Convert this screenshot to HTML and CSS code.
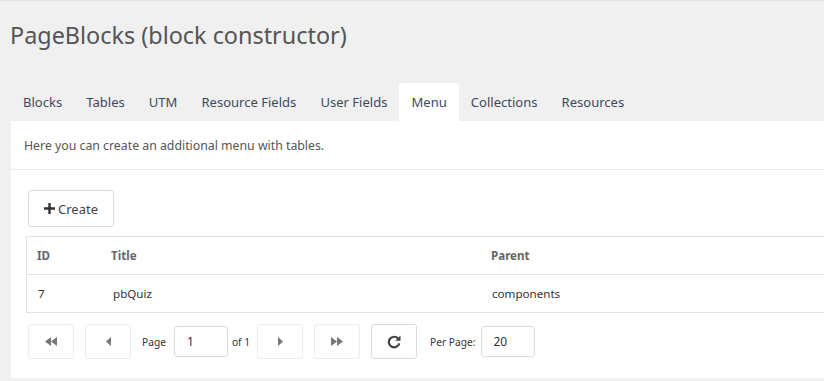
FILE: index.html
```html
<!DOCTYPE html>
<html>
<head>
<meta charset="utf-8">
<link rel="stylesheet" href="styles.css">
</head>
<body>
<div class="page">
  <h1 class="title">PageBlocks (block constructor)</h1>
  <div class="tabs">
    <div class="tab">Blocks</div>
    <div class="tab">Tables</div>
    <div class="tab">UTM</div>
    <div class="tab">Resource Fields</div>
    <div class="tab">User Fields</div>
    <div class="tab active">Menu</div>
    <div class="tab">Collections</div>
    <div class="tab">Resources</div>
  </div>
  <div class="panel">
    <div class="desc">Here you can create an additional menu with tables.</div>
    <div class="content">
      <div class="toolbar">
        <button class="btn create"><svg class="plus" width="11" height="11" viewBox="0 0 11 11"><path d="M4.3 0h2.4v4.3H11v2.4H6.7V11H4.3V6.7H0V4.3h4.3z" fill="#333"/></svg>Create</button>
      </div>
      <div class="grid">
        <div class="row head">
          <div class="c c-id">ID</div>
          <div class="c c-title">Title</div>
          <div class="c c-parent">Parent</div>
        </div>
        <div class="row">
          <div class="c c-id">7</div>
          <div class="c c-title">pbQuiz</div>
          <div class="c c-parent">components</div>
        </div>
      </div>
      <div class="pager">
        <button class="pbtn dis"><svg width="12" height="9" viewBox="0 0 12 9"><path d="M6 0v9L0 4.5zM12 0v9L6 4.5z" fill="#777"/></svg></button>
        <button class="pbtn dis"><svg width="5" height="9" viewBox="0 0 5 9"><path d="M5 0v9L0 4.5z" fill="#777"/></svg></button>
        <span class="lbl">Page</span>
        <input class="inp page-inp" value="1">
        <span class="lbl of">of 1</span>
        <button class="pbtn dis"><svg width="5" height="9" viewBox="0 0 5 9"><path d="M0 0v9l5-4.5z" fill="#777"/></svg></button>
        <button class="pbtn dis"><svg width="12" height="9" viewBox="0 0 12 9"><path d="M0 0v9l6-4.5zM6 0v9l6-4.5z" fill="#777"/></svg></button>
        <button class="pbtn refresh"><svg width="14" height="15" viewBox="0 0 14 15"><path d="M11.2 4.6A5.3 5.3 0 1 0 12.3 9.4" fill="none" stroke="#444" stroke-width="2.2"/><path d="M13.5 1.5v5.2H8.3z" fill="#444"/></svg></button>
        <span class="lbl per">Per Page:</span>
        <input class="inp per-inp" value="20">
      </div>
    </div>
  </div>
</div>
</body>
</html>
```
FILE: styles.css
```css
html, body {
  margin: 0;
  padding: 0;
  overflow: hidden;
}
body {
  background: #f0f0f0;
  font-family: "Noto Sans", "Open Sans", sans-serif;
  color: #555;
  border-top: 1px solid #e4e4e4;
}
.page {
  padding-left: 11px;
}
.title {
  margin: 0 0 0 -1px;
  padding-top: 17px;
  font-size: 23.4px;
  font-weight: 400;
  color: #555;
  line-height: 34px;
  height: 65px;
}
.tabs {
  display: flex;
}
.tab {
  padding: 0 12px;
  height: 38px;
  line-height: 38px;
  font-size: 13.05px;
  color: #3d4a5a;
  border-radius: 3px 3px 0 0;
}
.tab.active {
  background: #fff;
}
.panel {
  background: #fff;
  margin-right: -40px;
  padding-bottom: 19px;
}
.desc {
  height: 48px;
  line-height: 50px;
  padding-left: 13px;
  font-size: 12.3px;
  color: #555;
  border-bottom: 1px solid #e8e8e8;
}
.content {
  padding: 20px 0 0 15px;
}
.toolbar {
  display: flex;
  padding-left: 2px;
}
.btn {
  font-family: inherit;
  background: #fff;
  border: 1px solid #dcdcdc;
  border-radius: 3px;
  height: 37px;
  padding: 0 15px 0 15px;
  font-size: 13px;
  color: #444;
  display: flex;
  align-items: center;
  gap: 3px;
}
.grid {
  margin-top: 9px;
  border: 1px solid #e2e2e2;
  border-right: none;
}
.row {
  display: flex;
  height: 37px;
  align-items: center;
  font-size: 11.6px;
  color: #333;
}
.row + .row {
  border-top: 1px solid #e2e2e2;
}
.row.head {
  font-weight: 700;
  color: #666;
}
.c-id { width: 74px; padding-left: 10px; }
.c-title { width: 380px; padding-left: 0; }
.c-parent { flex: 1; }
.row:not(.head) .c-title { padding-left: 2px; width: 378px; }
.row:not(.head) .c-id { padding-left: 11px; width: 73px; }
.row:not(.head) .c-parent { padding-left: 1px; }
.pager {
  display: flex;
  align-items: center;
  margin-top: 11px;
  padding-left: 2px;
  height: 35px;
}
.pbtn {
  width: 46px;
  height: 35px;
  background: #fff;
  border: 1px solid #ececec;
  border-radius: 3px;
  display: flex;
  align-items: center;
  justify-content: center;
  padding: 0;
  margin-right: 11px;
}
.pbtn.refresh {
  border-color: #dcdcdc;
  margin-right: 13px;
}
.lbl {
  font-size: 10.2px;
  color: #333;
  margin-right: 8px;
}
.lbl.of {
  margin-left: 4px;
  margin-right: 7px;
}
.lbl.per {
  margin-left: 0;
  margin-right: 6px;
}
.inp {
  font-family: inherit;
  border: 1px solid #dcdcdc;
  border-radius: 3px;
  height: 31px;
  box-sizing: border-box;
  padding: 0 0 0 12px;
  font-size: 12px;
  color: #333;
  outline: none;
}
.page-inp {
  width: 54px;
  margin-right: 0;
}
.per-inp {
  width: 54px;
  padding-left: 11px;
}
```
